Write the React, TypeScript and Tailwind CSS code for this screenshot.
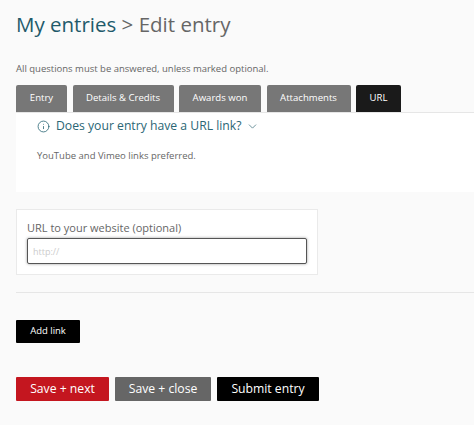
import { ChevronDown, Info } from "lucide-react";

const TABS = [
  { label: "Entry", width: "w-[51px]" },
  { label: "Details & Credits", width: "w-[101px]" },
  { label: "Awards won", width: "w-[82px]" },
  { label: "Attachments", width: "w-[84px]" },
];

export default function App() {
  return (
    <div className="h-[425px] w-[474px] overflow-hidden bg-[#fafafa] pl-4 font-['Open_Sans',sans-serif] text-[#555]">
      <h1 className="pt-[7px] text-[20.5px] leading-[34px] whitespace-nowrap">
        <span className="text-[#1f5a6b]">My entries</span>
        <span className="text-[#666]"> &gt; Edit entry</span>
      </h1>

      <p className="mt-[21px] text-[9.5px] leading-[14px] text-[#666]">All questions must be answered, unless marked optional.</p>

      {/* Tabs */}
      <div className="mt-[9px] flex gap-[5.5px]">
        {TABS.map((t) => (
          <div key={t.label} className={`${t.width} flex h-[27px] items-center justify-center rounded-t-[2px] bg-[#777] text-[9.6px] text-white`}>
            {t.label}
          </div>
        ))}
        <div className="flex h-[27px] w-[45px] items-center justify-center rounded-t-[2px] bg-[#1a1a1a] text-[9.6px] text-white">URL</div>
      </div>

      <div className="h-[80px] border-t border-[#e6e6e6] bg-white pl-[21px]">
        <div className="flex h-[26px] items-center text-[#2a6675]">
          <Info className="mr-[6px] size-[13px]" strokeWidth={1.5} />
          <span className="text-[12.2px] whitespace-nowrap">Does your entry have a URL link?</span>
          <ChevronDown className="ml-[5px] size-[13px] text-[#4f7c88]" strokeWidth={1.5} />
        </div>
        <p className="mt-[10px] text-[9.5px] leading-[14px] text-[#666]">YouTube and Vimeo links preferred.</p>
      </div>

      {/* URL field */}
      <div className="mt-[17px] h-[66px] w-[302px] border border-[#eaeaea] bg-white px-[10px] pt-[10px]">
        <label className="block text-[11px] leading-[16px] text-[#666]">URL to your website (optional)</label>
        <input
          readOnly
          placeholder="http://"
          className="mt-[2px] h-[26px] w-[280px] rounded-[2px] border border-[#555] bg-white px-[5px] text-[9px] shadow-[0_0_3px_rgba(0,0,0,0.4)] outline-none placeholder:text-[#ccc]"
        />
      </div>

      <div className="mt-[17px] h-px bg-[#e6e6e6]" />

      <button className="mt-[27px] block h-[23px] w-[64px] rounded-[1px] bg-black text-[9.5px] font-medium text-white">Add link</button>

      <div className="mt-[34px] flex gap-[6px]">
        <button className="h-[24px] w-[93px] rounded-[1px] bg-[#c4161f] text-[12.2px] text-white">Save + next</button>
        <button className="h-[24px] w-[96px] rounded-[1px] bg-[#666] text-[12.2px] text-white">Save + close</button>
        <button className="h-[24px] w-[102px] rounded-[1px] bg-black text-[12.2px] text-white">Submit entry</button>
      </div>
    </div>
  );
}
